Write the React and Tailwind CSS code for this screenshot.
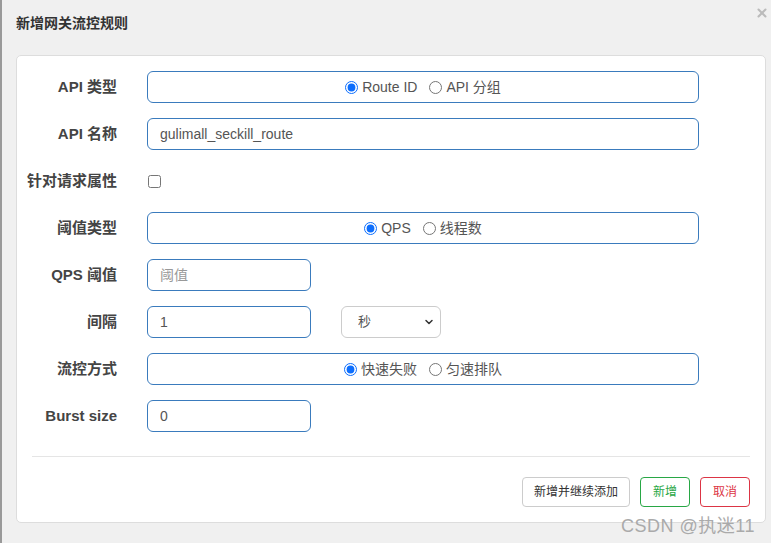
import { ChevronDown, X } from "lucide-react";

const font = { fontFamily: '"Liberation Sans", "Noto Sans CJK SC", sans-serif' };

function Row({ label, children }) {
  return (
    <div className="flex items-center h-8 mb-[15px]">
      <div className="w-[100px] text-right text-[15px] font-bold text-[#444] whitespace-nowrap">{label}</div>
      <div className="ml-[30px] flex items-center">{children}</div>
    </div>
  );
}

function RadioBox({ name, options }) {
  return (
    <div className="w-[552px] h-8 border border-[#3a7bbd] rounded-[6px] flex items-center justify-center gap-[12px] text-[14px] text-[#555]">
      {options.map((opt, i) => (
        <label key={opt} className="flex items-center gap-[4px]">
          <input type="radio" name={name} defaultChecked={i === 0} className="w-[13px] h-[13px] m-0 accent-[#0d6efd]" />
          <span>{opt}</span>
        </label>
      ))}
    </div>
  );
}

function SmallInput({ value, placeholder }) {
  return (
    <input
      defaultValue={value}
      placeholder={placeholder}
      className="w-[164px] h-8 border border-[#3a7bbd] rounded-[6px] px-[12px] text-[14px] text-[#555] placeholder:text-[#999] outline-none"
    />
  );
}

export default function App() {
  return (
    <div className="relative w-[771px] h-[543px] bg-[#f0f0f0] border-l-2 border-[#999] overflow-hidden" style={font}>
      <div className="pl-[14px] pt-[13px] h-[55px] text-[14px] font-bold text-[#333]">新增网关流控规则</div>
      <X className="absolute top-[6px] right-[2px] w-[14px] h-[14px] text-[#bbb]" strokeWidth={3.5} />

      <div className="ml-[14px] w-[750px] bg-white border border-[#ddd] rounded-[5px] pt-[15px] pb-[15px]">
        <Row label="API 类型">
          <RadioBox name="apiType" options={["Route ID", "API 分组"]} />
        </Row>
        <Row label="API 名称">
          <input
            defaultValue="gulimall_seckill_route"
            className="w-[552px] h-8 border border-[#3a7bbd] rounded-[6px] px-[12px] text-[14px] text-[#555] outline-none"
          />
        </Row>
        <Row label="针对请求属性">
          <input type="checkbox" className="w-[13px] h-[13px] m-0 ml-[1px]" />
        </Row>
        <Row label="阈值类型">
          <RadioBox name="gradeType" options={["QPS", "线程数"]} />
        </Row>
        <Row label="QPS 阈值">
          <SmallInput placeholder="阈值" />
        </Row>
        <Row label="间隔">
          <SmallInput value="1" />
          <div className="relative ml-[30px]">
            <select className="appearance-none w-[100px] h-8 border border-[#ccc] rounded-[6px] pl-[16px] text-[13px] text-[#555] bg-white outline-none">
              <option>秒</option>
              <option>分</option>
              <option>时</option>
              <option>天</option>
            </select>
            <ChevronDown className="absolute right-[6px] top-[10px] w-[12px] h-[12px] text-[#333] pointer-events-none" strokeWidth={3} />
          </div>
        </Row>
        <Row label="流控方式">
          <RadioBox name="controlBehavior" options={["快速失败", "匀速排队"]} />
        </Row>
        <Row label="Burst size">
          <SmallInput value="0" />
        </Row>

        <div className="mx-[15px] mt-[24px] border-t border-[#e5e5e5]"></div>

        <div className="flex justify-end gap-[10px] mr-[15px] mt-[20px]">
          <button className="h-[30px] px-[11px] border border-[#ccc] rounded-[4px] text-[12px] text-[#333] bg-white">新增并继续添加</button>
          <button className="h-[30px] w-[50px] border border-[#28a745] rounded-[4px] text-[12px] text-[#28a745] bg-white">新增</button>
          <button className="h-[30px] w-[50px] border border-[#dc3545] rounded-[4px] text-[12px] text-[#dc3545] bg-white">取消</button>
        </div>
      </div>

      <div className="absolute left-[619px] top-[513px] text-[18px] text-[#aaa] tracking-[0.5px]">CSDN @执迷11</div>
    </div>
  );
}
